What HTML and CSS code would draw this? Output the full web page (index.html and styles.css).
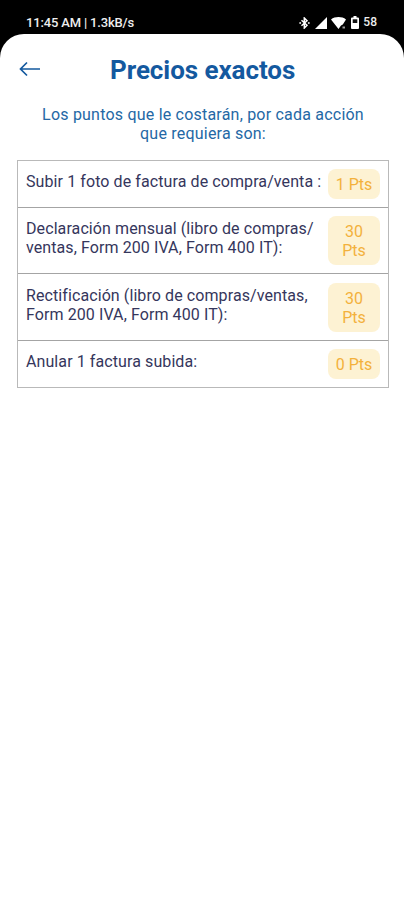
FILE: index.html
```html
<!DOCTYPE html>
<html lang="es">

<head>
  <meta charset="UTF-8">
  <meta name="viewport" content="width=device-width, initial-scale=1.0">
  <title>Precios exactos</title>
  <link rel="stylesheet" href="styles.css">
</head>

<body>
  <div class="status-bar">
    <span class="time">11:45 AM | 1.3kB/s</span>
    <div class="status-icons">
      <svg class="bluetooth" width="11" height="12" viewBox="0 0 11 12">
        <path d="M2.500 3.300 8 8.200 5.300 11V1L8 3.800 2.500 8.700" fill="none" stroke="#fff" stroke-width="1.500" />
        <circle cx="1.200" cy="6" r="1" fill="#ddd" />
        <circle cx="9.800" cy="6" r="1" fill="#ddd" />
      </svg>
      <svg class="signal" width="12" height="12" viewBox="0 0 12 12">
        <path d="M12 0v12H0z" fill="#fff" />
      </svg>
      <svg class="wifi" width="15" height="12" viewBox="0 0 15 12">
        <path d="M0 2.500C4-.7 11-.7 15 2.500L11.800 7.500 10 8.500 7.500 12z" fill="#fff" />
        <path d="M11.500 10.500h2.500" stroke="#999" stroke-width="2" />
      </svg>
      <svg class="battery" width="8" height="13" viewBox="0 0 8 13">
        <path d="M2.500 0h3v1.500H7q1 0 1 1V12q0 1-1 1H1q-1 0-1-1V2.500q0-1 1-1h1.500z" fill="#fff" />
        <path d="M1.700 3.300h4.600v3.700H1.700z" fill="#111" />
      </svg>
      <span class="level">58</span>
    </div>
  </div>

  <div class="screen">
    <div class="header">
      <svg class="back" width="22" height="16" viewBox="0 0 22 16">
        <path d="M21 8H1.500M8 1.500 1.500 8 8 14.500" fill="none" stroke="#14599f" stroke-width="1.700" />
      </svg>
      <h1 class="title">Precios exactos</h1>
    </div>
    <p class="intro">Los puntos que le costarán, por cada acción<br>que requiera son:</p>

    <div class="list">
      <div class="item">
        <p class="name">Subir 1 foto de factura de compra/venta :</p>
        <p class="points">1 Pts</p>
      </div>
      <div class="item">
        <p class="name">Declaración mensual (libro de compras/<br>ventas, Form 200 IVA, Form 400 IT):</p>
        <p class="points">30<br>Pts</p>
      </div>
      <div class="item">
        <p class="name">Rectificación (libro de compras/ventas,<br>Form 200 IVA, Form 400 IT):</p>
        <p class="points">30<br>Pts</p>
      </div>
      <div class="item">
        <p class="name">Anular 1 factura subida:</p>
        <p class="points">0 Pts</p>
      </div>
    </div>
  </div>
</body>

</html>
```
FILE: styles.css
```css
* {
  margin: 0;
  padding: 0;
  box-sizing: border-box;
}

body {
  height: 900px;
  display: flex;
  flex-direction: column;
  background-color: #000;
  font-family: Roboto, sans-serif;
}

.status-bar {
  height: 34px;
  padding: 11px 27px 0 26px;
  display: flex;
  justify-content: space-between;
  align-items: center;
  color: #eee;
  font-size: 13px;
  font-weight: 500;
  line-height: 23px;
}

.time {
  letter-spacing: -.17px;
}

.status-icons {
  display: flex;
  align-items: center;
  gap: 4.5px;
}

.level {
  font-size: 12px;
}

.screen {
  flex: 1;
  padding: 0 15px 0 17px;
  border-radius: 24px 24px 0 0;
  background-color: #fff;
}

.header {
  height: 70px;
  padding-left: 2px;
  display: flex;
  align-items: center;
}

.title {
  margin-left: 69px;
  padding-top: 1px;
  color: #14599f;
  font-size: 26px;
  font-weight: 700;
  letter-spacing: -.07px;
  white-space: nowrap;
}

.intro {
  padding-top: 1px;
  color: #2468a5;
  font-size: 16px;
  letter-spacing: .21px;
  line-height: 19px;
  text-align: center;
}

.list {
  margin-top: 17px;
  border: 1px solid #b9b9b9;
}

.item {
  padding: 8px;
  display: flex;
  justify-content: space-between;
  align-items: flex-start;
}

.item:nth-child(3) {
  padding: 9px 8px 8px;
}

.item + .item {
  border-top: 1px solid #a4a4a4;
}

.name {
  padding-top: 3px;
  color: #35365c;
  font-size: 16px;
  letter-spacing: .09px;
  line-height: 19px;
  white-space: nowrap;
}

.points {
  width: 52px;
  padding: 6px 0 5px;
  flex-shrink: 0;
  border-radius: 8px;
  background-color: #fdf2d3;
  color: #f3b13c;
  font-size: 16px;
  line-height: 19px;
  text-align: center;
}
```
